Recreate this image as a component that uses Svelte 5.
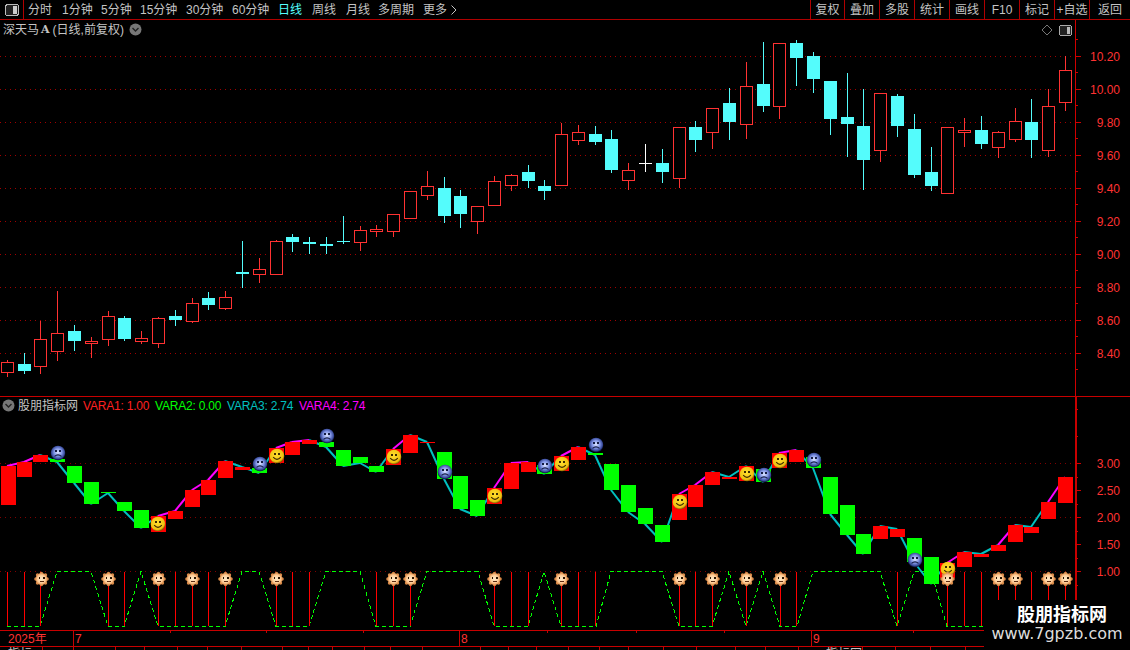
<script>
  const leftTabs = [
    { t: '分时', w: 34 }, { t: '1分钟', w: 39 }, { t: '5分钟', w: 39 }, { t: '15分钟', w: 46 },
    { t: '30分钟', w: 46 }, { t: '60分钟', w: 46 }, { t: '日线', w: 34, on: true }, { t: '周线', w: 34 },
    { t: '月线', w: 32 }, { t: '多周期', w: 45 }, { t: '更多', w: 44, more: true }
  ];
  const rightTabs = ['复权', '叠加', '多股', '统计', '画线', 'F10', '标记', '+自选', '返回'];

  // cx, high, bodyTop, bodyBottom, low, kind (r hollow red, c filled cyan, w white doji)
  const candles = [
    [7,360,362,373,377,'r'],[24,353,364,371,374,'c'],[40,321,339,367,374,'r'],[57,291,333,352,361,'r'],
    [74,325,331,341,351,'c'],[91,337,341,344,358,'r'],[108,311,316,340,346,'r'],[124,316,318,339,341,'c'],
    [141,331,338,342,344,'r'],[158,317,318,344,348,'r'],[175,310,316,320,326,'c'],[192,298,303,322,323,'r'],
    [208,292,298,305,310,'c'],[225,291,297,309,310,'r'],[242,241,272,274,288,'c'],[259,258,269,275,283,'r'],
    [276,240,241,275,275,'r'],[292,234,237,242,252,'c'],[309,237,242,244,254,'c'],[326,237,244,246,254,'c'],
    [343,216,241,242,244,'c'],[360,226,230,243,251,'r'],[376,225,229,232,237,'r'],[393,214,214,232,237,'r'],
    [410,191,191,219,219,'r'],[427,171,186,196,200,'r'],[444,177,188,216,223,'c'],[460,190,196,214,228,'c'],
    [477,206,206,222,234,'r'],[494,176,181,206,206,'r'],[511,174,175,186,191,'r'],[528,165,172,181,188,'c'],
    [544,180,186,191,200,'c'],[561,123,134,186,186,'r'],[578,125,132,141,145,'r'],[595,126,134,142,145,'c'],
    [611,130,139,170,173,'c'],[628,163,170,181,190,'r'],[645,144,163,163,172,'w'],[662,149,163,172,183,'c'],
    [679,127,127,179,188,'r'],[695,121,127,140,152,'c'],[712,108,108,133,149,'r'],[729,88,103,122,140,'c'],
    [746,62,86,125,139,'r'],[763,42,84,106,112,'c'],[779,43,43,107,119,'r'],[796,40,43,58,86,'c'],
    [813,52,56,79,93,'c'],[830,81,81,119,135,'c'],[847,73,117,124,157,'c'],[863,89,126,160,190,'c'],
    [880,93,93,151,162,'r'],[897,94,96,126,137,'c'],[914,114,129,175,178,'c'],[931,147,172,186,191,'c'],
    [947,127,127,194,194,'r'],[964,118,130,133,147,'r'],[981,116,130,144,149,'c'],[998,131,132,148,158,'r'],
    [1015,108,121,140,142,'r'],[1031,99,122,140,158,'c'],[1048,89,106,151,157,'r'],[1065,56,70,103,111,'r']
  ];

  // blockTop, blockBottom, colour (r / g), same order as the candles
  const blocks = [
    [466,505,'r'],[462,477,'r'],[455,462,'r'],[459,462,'g'],[466,483,'g'],[482,504,'g'],[492,493,'g'],[502,511,'g'],
    [510,528,'g'],[516,532,'r'],[511,519,'r'],[490,507,'r'],[480,495,'r'],[461,478,'r'],[467,470,'r'],[468,473,'g'],
    [448,463,'r'],[442,455,'r'],[440,444,'r'],[442,447,'g'],[450,466,'g'],[457,463,'g'],[466,472,'g'],[449,465,'r'],
    [435,453,'r'],[442,443,'r'],[452,479,'g'],[476,509,'g'],[500,516,'g'],[488,504,'r'],[463,489,'r'],[462,472,'r'],
    [465,474,'g'],[456,471,'r'],[447,460,'r'],[453,455,'g'],[464,490,'g'],[485,512,'g'],[508,524,'g'],[525,542,'g'],
    [494,520,'r'],[485,507,'r'],[472,485,'r'],[477,479,'r'],[466,481,'r'],[469,482,'g'],[453,468,'r'],[450,462,'r'],
    [457,468,'g'],[477,514,'g'],[505,535,'g'],[534,554,'g'],[526,539,'r'],[529,537,'r'],[538,562,'g'],[557,584,'g'],
    [563,578,'r'],[552,567,'r'],[554,557,'r'],[545,551,'r'],[525,542,'r'],[527,533,'r'],[502,519,'r'],[477,503,'r']
  ];

  const xs = candles.map((c) => c[0]);
  const closes = blocks.map((b) => (b[2] === 'r' ? b[0] : b[1]));
  const segments = closes.slice(1).map((y, i) => {
    const rising = y < closes[i];
    const wasRising = i === 0 || closes[i] < closes[i - 1];
    return { x1: xs[i], y1: closes[i], x2: xs[i + 1], y2: y, hot: rising && wasRising };
  });

  const smiles = [[158,524],[277,456],[394,457],[495,496],[562,464],[680,502],[747,474],[780,461],[948,569]];
  const frowns = [[58,453],[260,464],[327,436],[445,472],[545,466],[596,445],[764,475],[814,460],[915,560]];
  const suns = [41,108,158,192,225,276,393,410,494,561,679,712,746,780,947,998,1015,1048,1065];
  const bars = [7,24,40,108,124,158,175,192,208,225,276,292,309,376,393,410,494,511,528,561,578,595,679,695,712,746,780,796,897,947,964,981,998,1015,1031,1048,1065];
  const wave = [
    [7,1],[40,1],[57,0],[91,0],[108,1],[124,1],[141,0],[158,1],[225,1],[242,0],[259,0],[276,1],[309,1],[326,0],[360,0],
    [376,1],[410,1],[427,0],[478,0],[494,1],[528,1],[544,0],[561,1],[596,1],[611,0],[662,0],[679,1],[712,1],[729,0],
    [746,1],[763,0],[780,1],[797,1],[813,0],[880,0],[897,1],[914,0],[931,0],[947,1],[1000,1]
  ].map(([x, b]) => `${x},${b ? 626.5 : 571.5}`).join(' ');

  const priceLabels = ['10.20','10.00','9.80','9.60','9.40','9.20','9.00','8.80','8.60','8.40'];
  const priceRows = priceLabels.map((label, i) => ({ label, y: 56 + i * 33 }));
  const priceMinor = [...Array(11).keys()].map((i) => 39.5 + i * 33);
  const subLabels = [['3.00',463],['2.50',490],['2.00',517],['1.50',544],['1.00',571]];
  const subMinor = [409,436,477,504,531,558,585];
  const legend = [
    { t: 'VARA1: 1.00', c: 'red' }, { t: 'VARA2: 0.00', c: 'green' },
    { t: 'VARA3: 2.74', c: 'teal' }, { t: 'VARA4: 2.74', c: 'pink' }
  ];
  const topTicks = [170,266,363,547,636,724,913];
  const bottomTicks = [42,73,115,144,177,207,241,282,308,332,364,390,422,480,508,536,568,599,628,663,696,735,765,798,830,862,895,930,965];
</script>

{#snippet chevron()}
  <svg class="chev" width="13" height="13" viewBox="0 0 13 13">
    <circle cx="6.5" cy="6.5" r="6" fill="#777" />
    <path d="M3.5 5 L6.5 8 L9.5 5" fill="none" stroke="#222" stroke-width="1.4" />
  </svg>
{/snippet}

<div class="screen">
  <header class="toolbar">
    <div class="panel-btn">
      <svg width="14" height="12" viewBox="0 0 14 12">
        <rect x="0.5" y="0.5" width="13" height="11" rx="2.5" fill="#222" stroke="#bbb" />
        <rect x="8" y="2" width="4" height="8" fill="#ccc" />
      </svg>
    </div>
    <nav class="tabs">
      {#each leftTabs as tab}
        <span class="tab" class:on={tab.on} style:width="{tab.w}px">{tab.t}{#if tab.more}<svg class="more" width="6" height="10" viewBox="0 0 6 10"><path d="M0.5 0.5 L5 5 L0.5 9.5" fill="none" stroke="#c4c4c4" /></svg>{/if}</span>
      {/each}
    </nav>
    <nav class="actions">
      {#each rightTabs as t}
        <span class="action">{t}</span>
      {/each}
    </nav>
  </header>

  <section class="pane main">
    <div class="head">
      <span>深天马</span><b class="mark">A</b><span class="sub">(日线,前复权)</span>
      {@render chevron()}
    </div>
    <div class="corner">
      <svg width="12" height="12" viewBox="0 0 12 12"><path d="M6 1 L11 6 L6 11 L1 6 Z" fill="none" stroke="#777" /></svg>
      <svg width="13" height="11" viewBox="0 0 13 11">
        <rect x="0.5" y="0.5" width="12" height="10" rx="2" fill="#222" stroke="#aaa" />
        <rect x="7.5" y="2" width="3.5" height="7" fill="#bbb" />
      </svg>
    </div>
    <svg class="chart" width="1130" height="376" viewBox="0 20 1130 376">
      {#each priceRows as r}
        <line class="grid" x1="0" x2="1075" y1={r.y + 0.5} y2={r.y + 0.5} />
        <rect class="tickfill" x="1075" y={r.y} width="6" height="1" />
        <text class="axis" x="1120" y={r.y + 5} text-anchor="end">{r.label}</text>
      {/each}
      {#each priceMinor as y}
        <rect class="tickfill" x="1075" y={Math.floor(y)} width="3" height="1" />
      {/each}
      <rect class="tickfill" x="1075" y="20" width="1" height="376" />
      {#each candles as [x, hi, top, bot, lo, kind]}
        {#if kind === 'w'}
          <rect class="white" {x} y={hi} width="1" height={lo - hi} />
          <rect class="white" x={x - 6} y={top} width="13" height="1" />
        {:else}
          <rect class={kind === 'r' ? 'up' : 'down'} {x} y={hi} width="1" height={top - hi} />
          <rect class={kind === 'r' ? 'up' : 'down'} {x} y={bot} width="1" height={lo - bot} />
          {#if kind === 'r'}
            <rect class="hollow" x={x - 5.5} y={top + 0.5} width="12" height={bot - top - 1} />
          {:else}
            <rect class="down" x={x - 6} y={top} width="13" height={bot - top} />
          {/if}
        {/if}
      {/each}
    </svg>
  </section>

  <section class="pane lower">
    <div class="head legend">
      {@render chevron()}
      <span class="name">股朋指标网</span>
      {#each legend as l}
        <span class={l.c}>{l.t}</span>
      {/each}
    </div>
    <svg class="chart" width="1130" height="234" viewBox="0 396 1130 234">
      <defs>
        <radialGradient id="blue" cx="50%" cy="45%" r="52%">
          <stop offset="0" stop-color="#dfe6ff" />
          <stop offset="0.5" stop-color="#8296e6" />
          <stop offset="0.85" stop-color="#3a4c9c" />
          <stop offset="1" stop-color="#101a48" />
        </radialGradient>
        <radialGradient id="gold" cx="45%" cy="40%" r="60%">
          <stop offset="0" stop-color="#ffe030" />
          <stop offset="0.8" stop-color="#f0c010" />
          <stop offset="1" stop-color="#7a5c00" />
        </radialGradient>
        <radialGradient id="peach" cx="50%" cy="50%" r="55%">
          <stop offset="0" stop-color="#ffeccc" />
          <stop offset="0.6" stop-color="#ffcc96" />
          <stop offset="1" stop-color="#d8813c" />
        </radialGradient>
        <g id="smile">
          <circle r="7.3" fill="url(#gold)" />
          <rect x="-3" y="-3" width="1.6" height="2.4" fill="#3a2a00" />
          <rect x="1.4" y="-3" width="1.6" height="2.4" fill="#3a2a00" />
          <path d="M-3.8 1.2 Q0 5.6 3.8 1.2" fill="none" stroke="#3a2a00" stroke-width="1.1" />
        </g>
        <g id="frown">
          <circle r="7.3" fill="url(#blue)" />
          <rect x="-3" y="-3" width="1.6" height="2.2" fill="#141c44" />
          <rect x="1.4" y="-3" width="1.6" height="2.2" fill="#141c44" />
          <path d="M-3.5 3.4 Q0 0.4 3.5 3.4" fill="none" stroke="#141c44" stroke-width="1.1" />
        </g>
        <g id="sun">
          <g fill="#d98a48">
            <circle cx="0" cy="-5.6" r="1.7" /><circle cx="0" cy="5.6" r="1.7" />
            <circle cx="-5.6" cy="0" r="1.7" /><circle cx="5.6" cy="0" r="1.7" />
            <circle cx="-4" cy="-4" r="1.7" /><circle cx="4" cy="-4" r="1.7" />
            <circle cx="-4" cy="4" r="1.7" /><circle cx="4" cy="4" r="1.7" />
          </g>
          <circle r="5.9" fill="url(#peach)" />
          <rect x="-3" y="-2" width="1.6" height="2" fill="#2a1400" />
          <rect x="1.4" y="-2" width="1.6" height="2" fill="#2a1400" />
          <rect x="-2" y="1.6" width="4" height="1.6" fill="#5a2a10" />
        </g>
      </defs>
      <rect class="border" x="0" y="396" width="1130" height="1" />
      <rect class="border" x="1075" y="396" width="2" height="204" />
      {#each subLabels as [label, y]}
        <rect class="tickfill" x="1075" {y} width="6" height="1" />
        <text class="axis" x="1120" y={y + 5} text-anchor="end">{label}</text>
      {/each}
      {#each subMinor as y}
        <rect class="tickfill" x="1075" {y} width="3" height="1" />
      {/each}
      <line class="grid dim" x1="0" x2="1075" y1="463.5" y2="463.5" />
      <line class="grid dim" x1="0" x2="1075" y1="517.5" y2="517.5" />
      <line class="grid dim" x1="0" x2="1075" y1="571.5" y2="571.5" />

      <polyline class="wave" points={wave} />
      {#each bars as x}
        <rect class="solid-r" {x} y="572" width="1" height="54" />
      {/each}

      {#each segments as s}
        <line class="seg" class:hot={s.hot} x1={s.x1} y1={s.y1} x2={s.x2} y2={s.y2} />
      {/each}
      {#each blocks as [top, bot, kind], i}
        <rect class={kind === 'r' ? 'solid-r' : 'solid-g'} x={Math.max(1, xs[i] - 7)} y={top} width="15" height={bot - top} />
      {/each}

      {#each smiles as [x, y]}<use href="#smile" {x} {y} />{/each}
      {#each frowns as [x, y]}<use href="#frown" {x} {y} />{/each}
      {#each suns as x}<use href="#sun" x={x + 0.5} y="579" />{/each}
    </svg>
  </section>

  <footer class="timeline">
    <svg width="1130" height="20" viewBox="0 630 1130 20">
      <rect class="border" x="0" y="630" width="1130" height="1" />
      <rect class="border" x="0" y="646" width="1130" height="1" />
      <text class="axis" x="8" y="643">2025年</text>
      {#each [[73, '7'], [459, '8'], [811, '9']] as [x, label]}
        <rect class="border" {x} y="630" width="1" height="16" />
        <text class="axis" x={x + 2} y="643">{label}</text>
      {/each}
      {#each topTicks as x}
        <rect class="border" {x} y="631" width="1" height="2" />
      {/each}
      {#each bottomTicks as x}
        <rect class="border" {x} y="647" width="1" height="3" />
      {/each}
      <text class="clip" x="8" y="658">指标</text>
      <text class="clip" x="50" y="658">,</text>
      <text class="clip" x="826" y="658">指标网</text>
    </svg>
  </footer>

  <aside class="stamp">
    <strong>股朋指标网</strong>
    <span>www.7gpzb.com</span>
  </aside>
</div>

<style>
  :global(body) { margin: 0; background: #000; }

  .screen {
    position: relative;
    width: 1130px;
    height: 650px;
    overflow: hidden;
    background: #000;
    color: #c4c4c4;
    font: 12px/1 "Liberation Sans", "Noto Sans CJK SC", sans-serif;
  }

  .toolbar {
    display: flex;
    height: 19px;
    border-bottom: 1px solid #b00000;
  }
  .panel-btn {
    display: flex;
    align-items: center;
    justify-content: center;
    width: 23px;
    border-right: 1px solid #b00000;
  }
  .tabs { display: flex; align-items: center; padding-left: 4px; }
  .tab { display: flex; align-items: center; white-space: nowrap; }
  .tab.on { color: #55ffff; }
  .more { margin-left: 4px; }
  .actions { display: flex; margin-left: auto; }
  .action {
    display: flex;
    align-items: center;
    justify-content: center;
    width: 34px;
    border-left: 1px solid #b00000;
    white-space: nowrap;
  }
  .action:first-child { width: 33px; }
  .action:last-child { width: 40px; }

  .pane { position: relative; }
  .chart, .timeline svg { display: block; }
  .head {
    position: absolute;
    top: 3px;
    left: 3px;
    display: flex;
    align-items: center;
    height: 13px;
    white-space: nowrap;
  }
  .mark { font: bold 11px "DejaVu Serif", serif; margin: 0 3px 0 2px; }
  .chev { margin-left: 5px; }
  .legend { top: 3px; left: 2px; }
  .legend .chev { margin-left: 0; }
  .legend .name { margin: 0 5px 0 3px; }
  .legend span + span { width: 72px; letter-spacing: -0.2px; }
  .red { color: #ff2020; }
  .green { color: #00ff00; }
  .teal { color: #00c0c0; }
  .pink { color: #ff00ff; }

  .corner {
    position: absolute;
    top: 4px;
    left: 1041px;
    display: flex;
    align-items: center;
    gap: 6px;
  }

  .grid { stroke: #a00000; stroke-dasharray: 1 4; shape-rendering: crispEdges; }
  .grid.dim { stroke: #800000; }
  rect { shape-rendering: crispEdges; }
  .tickfill { fill: #d00000; }
  .border { fill: #c80000; }
  .up { fill: #ff3232; }
  .down { fill: #54fcfc; }
  .white { fill: #fff; }
  .hollow { fill: #000; stroke: #ff3232; stroke-width: 1; }
  .solid-r { fill: #ff0000; }
  .solid-g { fill: #00ff00; }
  .axis { fill: #ff3232; font: 12px "Liberation Sans", "Noto Sans CJK SC", sans-serif; }
  .clip { fill: #c4c4c4; font: 12px "Liberation Sans", "Noto Sans CJK SC", sans-serif; }
  .wave {
    fill: none;
    stroke: #00ff00;
    stroke-width: 1;
    stroke-dasharray: 4 3;
    shape-rendering: crispEdges;
  }
  .seg { stroke: #00c0c0; stroke-width: 2; }
  .seg.hot { stroke: #ff00ff; }

  .stamp {
    position: absolute;
    right: 0;
    bottom: 0;
    display: flex;
    flex-direction: column;
    align-items: center;
    gap: 2px;
    width: 146px;
    height: 50px;
    padding-top: 6px;
    box-sizing: border-box;
    background: #000;
    color: #fff;
  }
  .stamp strong { font-size: 18px; line-height: 18px; padding-left: 10px; }
  .stamp span { font: 16px/16px "DejaVu Sans", sans-serif; color: #ddd; }
</style>
